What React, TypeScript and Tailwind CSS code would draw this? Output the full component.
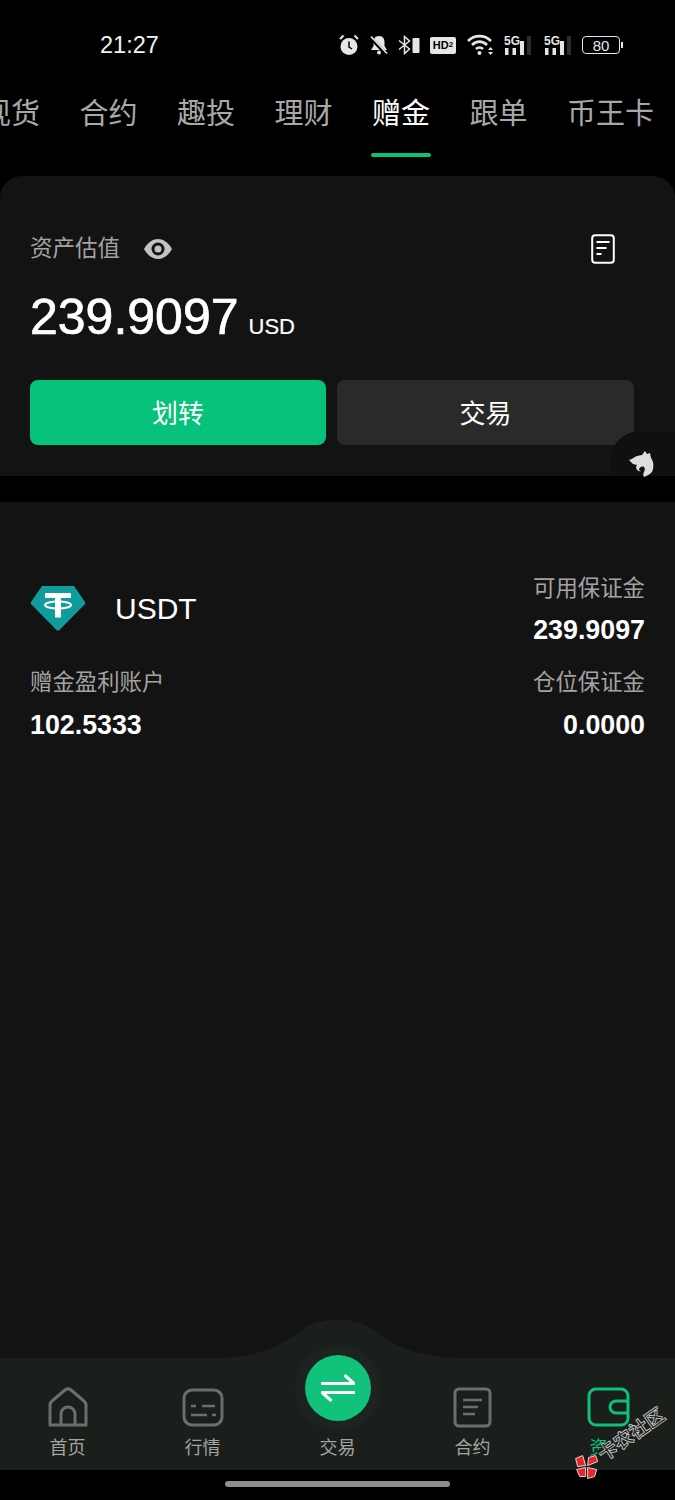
import React from "react";

const font = { fontFamily: '"Liberation Sans","Noto Sans CJK SC",sans-serif' };
const ink = "#e6e6e6";

function Signal({ className }: { className: string }) {
  return (
    <div className={`relative h-[20px] w-[29px] shrink-0 ${className}`}>
      <span className="absolute left-[1px] top-[0px] text-[12px] font-bold leading-[12px] text-[#e6e6e6]">5G</span>
      <svg width="29" height="20" viewBox="0 0 29 20" className="absolute left-0 top-0">
        <rect x="2" y="13" width="3.500" height="7" fill={ink} />
        <rect x="9.500" y="13" width="3.500" height="7" fill={ink} />
        <rect x="17" y="6" width="4" height="14" fill={ink} />
        <rect x="24" y="1" width="4" height="19" fill="#2c2c2c" />
      </svg>
    </div>
  );
}

function StatusIcons() {
  return (
    <div className="flex items-center pl-[339px]">
      <svg width="20" height="22" viewBox="0 0 20 22" className="shrink-0">
        <circle cx="10" cy="12.500" r="8.500" fill={ink} />
        <path d="M10 7.500v5.500l3 2" stroke="#000" strokeWidth="1.500" fill="none" />
        <path d="M1 5 4.500 1.500M19 5 15.500 1.500" stroke={ink} strokeWidth="2" />
      </svg>
      <svg width="18" height="20" viewBox="0 0 18 20" className="ml-[11px] shrink-0">
        <path d="M9 1C5 1 3.500 4 3.500 7v4L1 15h16l-2.500-4V7C14.500 4 13 1 9 1z" fill={ink} />
        <circle cx="9" cy="17.500" r="2" fill={ink} />
        <path d="M0 2 16 19" stroke="#000" strokeWidth="3.500" />
        <path d="M1 1.500 17 18.500" stroke={ink} strokeWidth="1.700" />
      </svg>
      <svg width="22" height="20" viewBox="0 0 22 20" className="ml-[10px] shrink-0">
        <path d="M1 5.500 11.500 14 6.500 18.500V1.500L11.500 6 1 14.500" stroke={ink} strokeWidth="1.500" fill="none" />
        <rect x="14.500" y="3" width="7" height="15" rx="1" fill={ink} />
      </svg>
      <div className="ml-[10px] flex h-[17px] w-[26px] shrink-0 items-center justify-center rounded-[2px] bg-[#e6e6e6] text-[11px] font-bold leading-none text-black">
        HD<span className="text-[8px]">2</span>
      </div>
      <svg width="27" height="22" viewBox="0 0 27 22" className="ml-[11px] shrink-0">
        <path d="M1 7C7.500 .5 17.500 .5 24 7M5 11C9.500 6.500 15.500 6.500 20 11M9 15C11 13 14 13 16 15" stroke={ink} strokeWidth="2.600" fill="none" />
        <circle cx="12.500" cy="19" r="2" fill={ink} />
        <path d="M21 16h5l-2.500-3zM21 18h5l-2.500 3z" fill={ink} />
      </svg>
      <Signal className="ml-[9px]" />
      <Signal className="ml-[11px]" />
      <div className="relative ml-[10px] flex h-[18px] w-[38px] shrink-0 items-center justify-center rounded-[4px] border border-[#e6e6e6] text-[15px] leading-none text-[#e6e6e6]">
        80
        <span className="absolute right-[-4px] top-[5px] h-[6px] w-[2px] bg-[#e6e6e6]" />
      </div>
    </div>
  );
}

const tabs = ["现货", "合约", "趣投", "理财", "赠金", "跟单", "币王卡"];

function Tether() {
  return (
    <svg width="56" height="46" viewBox="0 0 56 46" className="shrink-0">
      <path d="M12 1h32l11 16c.5 .8 .4 1.500-.2 2.200L29.500 45c-.8 .8-2.200 .8-3 0L1.200 19.200C.6 18.500 .5 17.800 1 17z" fill="#109c9b" />
      <path d="M15 8h26v5H31v19.500h-6V13H15z" fill="#fff" />
      <ellipse cx="28" cy="20" rx="13" ry="3.500" fill="none" stroke="#fff" strokeWidth="2" />
    </svg>
  );
}

function Nav({ label, active, children }: { label: string; active?: boolean; children: React.ReactNode }) {
  return (
    <div className="flex w-[135px] flex-col items-center">
      <div className="h-[44px]">{children}</div>
      <span className={`mt-[6px] text-[18px] leading-[22px] ${active ? "text-[#0cc27a]" : "text-[#a3a5a3]"}`}>{label}</span>
    </div>
  );
}

export default function App() {
  return (
    <div style={font} className="relative flex h-[1500px] w-[675px] flex-col overflow-hidden bg-black text-white">
      <div className="relative h-[88px] shrink-0">
        <div className="absolute left-[100px] top-[31px] text-[23.500px] leading-[28px] text-[#f2f2f2]">21:27</div>
        <div className="pt-[34px]"><StatusIcons /></div>
      </div>

      <div className="ml-[-18px] flex h-[70px] w-max shrink-0 gap-[39.500px] whitespace-nowrap">
        {tabs.map((t) => (
          <div key={t} className="relative shrink-0">
            <span className={`text-[29px] leading-[52px] ${t === "赠金" ? "text-white" : "text-[#a8a8a8]"}`}>{t}</span>
            {t === "赠金" && <span className="absolute bottom-[1px] left-[-1px] right-[-1px] h-[4px] rounded-full bg-[#0cc27a]" />}
          </div>
        ))}
      </div>

      <div className="mt-[18px] h-[300px] shrink-0 rounded-t-[22px] bg-[#131313] px-[30px] pt-[58px]">
        <div className="flex items-center justify-between pr-[30px]">
          <div className="flex items-center">
            <span className="text-[22.500px] leading-[30px] text-[#a3a3a3]">资产估值</span>
            <svg width="28" height="20" viewBox="0 0 28 20" className="ml-[24px]">
              <path d="M0 10C4 3 9 0 14 0s10 3 14 10c-4 7-9 10-14 10S4 17 0 10z" fill="#c2c2c2" />
              <circle cx="14" cy="10" r="6.500" fill="#131313" />
              <circle cx="14" cy="10" r="3.500" fill="#c2c2c2" />
            </svg>
          </div>
          <svg width="24" height="30" viewBox="0 0 24 30">
            <rect x="1.200" y="1.200" width="21.600" height="27.600" rx="3" fill="none" stroke="#fff" strokeWidth="2" />
            <path d="M5.500 8h13M5.500 14h10M5.500 20h5" stroke="#fff" strokeWidth="2" />
          </svg>
        </div>
        <div className="mt-[25px] flex h-[56px] items-baseline">
          <span className="text-[50px] leading-[56px] text-white [-webkit-text-stroke:0.7px_#fff]">239.9097</span>
          <span className="ml-[10px] text-[22px] text-white [-webkit-text-stroke:0.2px_#fff]">USD</span>
        </div>
        <div className="mt-[35px] flex gap-[11px]">
          <div className="flex h-[65px] w-[296px] items-center justify-center rounded-[8px] bg-[#07c27a] pt-[4px] text-[26px] text-white">划转</div>
          <div className="flex h-[65px] w-[297px] items-center justify-center rounded-[8px] bg-[#2a2a2a] pt-[4px] text-[26px] text-white">交易</div>
        </div>
      </div>

      <div className="absolute right-0 top-[431px] h-[45px] w-[65px] rounded-tl-[30px] bg-[#101010]" />
      <svg width="26" height="26" viewBox="0 0 26 26" className="absolute left-[629px] top-[451px]">
        <path d="M0 9c3-.5 5-3 8-4l5-1 3-4 2 3 3-1 1 5c3 4 3 10 1 14-2 2-5 4-8 5-1-2-1-3 0-5 1-2 1-4 0-5-2-1-4 0-5 2 0 1 1 2 2 2-2 1-5-1-5-4l1-2-4-1-3-3z" fill="#dddddd" />
      </svg>
      <div className="h-[26px] shrink-0 bg-black" />

      <div className="flex-1 bg-[#131313] px-[30px] pt-[72px]">
        <div className="flex items-start justify-between">
          <div>
            <div className="flex h-[78px] items-start pt-[11px]">
              <Tether />
              <span className="ml-[29px] mt-[1px] text-[30px] leading-[46px] text-white">USDT</span>
            </div>
            <div className="mt-[16px] text-[22.400px] leading-[30px] text-[#a3a3a3]">赠金盈利账户</div>
            <div className="mt-[12px] text-[26.800px] font-bold leading-[30px] text-white">102.5333</div>
          </div>
          <div className="text-right">
            <div className="text-[22.400px] leading-[30px] text-[#a3a3a3]">可用保证金</div>
            <div className="mt-[11px] text-[26.800px] font-bold leading-[30px] text-white">239.9097</div>
            <div className="mt-[23px] text-[22.400px] leading-[30px] text-[#a3a3a3]">仓位保证金</div>
            <div className="mt-[12px] text-[26.800px] font-bold leading-[30px] text-white">0.0000</div>
          </div>
        </div>
      </div>

      <div className="relative h-[112px] shrink-0 bg-[#1a1f1b]">
        <svg width="300" height="40" viewBox="0 0 300 40" className="absolute left-[188px] top-[-39px]">
          <path d="M0 40C60 40 85 33 110 14C130 -4 168 -4 190 14C215 33 240 40 300 40z" fill="#1a1f1b" />
        </svg>
        <div className="absolute left-[295px] top-[-13px] h-[86px] w-[86px] rounded-full bg-[#1d2320]" />
        <div className="absolute left-[305px] top-[-3px] flex h-[66px] w-[66px] items-center justify-center rounded-full bg-[#10c27a]">
          <svg width="34" height="28" viewBox="0 0 34 28">
            <path d="M1 9.500h32L24.500 2M33 18.500H1l8.500 7.500" stroke="#fff" strokeWidth="3.200" fill="none" strokeLinecap="round" strokeLinejoin="round" />
          </svg>
        </div>
        <div className="relative flex pt-[29px]">
          <Nav label="首页">
            <svg width="42" height="42" viewBox="0 0 42 42" fill="none" stroke="#6a6f6c" strokeWidth="3">
              <path d="M3 38V18c0-1.500.5-2.500 1.500-3.500L18 3c2-1.500 4-1.500 6 0l13.500 11.500c1 1 1.500 2 1.500 3.500v20z" strokeLinejoin="round" />
              <path d="M14 38V27a7 7 0 0 1 14 0v11" />
            </svg>
          </Nav>
          <Nav label="行情">
            <svg width="42" height="42" viewBox="0 0 42 42" fill="none" stroke="#6a6f6c" strokeWidth="3">
              <rect x="2" y="3" width="38" height="35" rx="8" />
              <path d="M9 19h5M20 19h13M9 28h16M30 28h4" strokeWidth="2.500" />
            </svg>
          </Nav>
          <div className="flex w-[135px] flex-col items-center pt-[50px]">
            <span className="text-[18px] leading-[22px] text-[#a3a5a3]">交易</span>
          </div>
          <Nav label="合约">
            <svg width="40" height="42" viewBox="0 0 40 42" fill="none" stroke="#6a6f6c" strokeWidth="3">
              <rect x="2" y="2" width="35" height="37" rx="4" />
              <path d="M10 13h19M10 20h15M10 27h12" strokeWidth="2.500" />
            </svg>
          </Nav>
          <Nav label="资产" active>
            <svg width="44" height="42" viewBox="0 0 44 42" fill="none" stroke="#0cc27a" strokeWidth="3">
              <path d="M36 38H10a7 7 0 0 1-7-7V9a7 7 0 0 1 7-7h25a7 7 0 0 1 7 7v22a7 7 0 0 1-6 7z" />
              <path d="M42 14H30a6 6 0 0 0 0 12h12" />
            </svg>
          </Nav>
        </div>
      </div>

      <div className="relative h-[30px] shrink-0 bg-black">
        <div className="absolute left-[225px] top-[11px] h-[6px] w-[225px] rounded-full bg-[#8d8d8d]" />
      </div>

      <div className="absolute left-[576px] top-[1456px] flex h-[36px] w-max origin-left -rotate-[35deg] items-center gap-[4px] whitespace-nowrap">
        <svg width="26" height="26" viewBox="0 0 26 26" className="rotate-[35deg]">
          <g stroke="#d8d8d8" strokeWidth="1">
            <path d="M12 12 9 2 2 5l2 8z" fill="#e8262b" />
            <path d="M14 12 24 8l-2-6-7 2z" fill="#e8262b" />
            <path d="M12 14 3 16l3 7 6 0z" fill="#e8262b" />
            <path d="M14 14l9 2-2 7-7 2z" fill="#e8262b" />
          </g>
        </svg>
        <span className="bg-[#1a1f1b] text-[19px] font-bold leading-[14px] text-[#1a1f1b] [-webkit-text-stroke:0.8px_#d0d0d0]">卡农社区</span>
      </div>
    </div>
  );
}
